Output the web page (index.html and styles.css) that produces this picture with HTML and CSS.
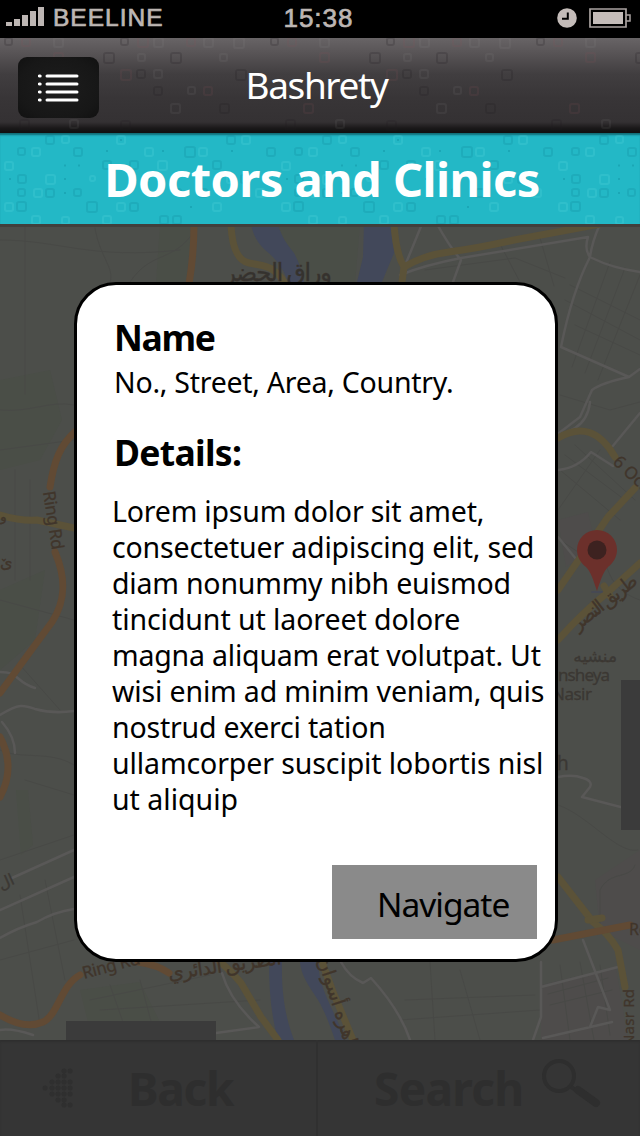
FILE: index.html
```html
<!DOCTYPE html>
<html lang="en">
<head>
<meta charset="utf-8">
<title>Bashrety</title>
<link rel="stylesheet" href="styles.css">
</head>
<body>
<div class="screen">
  <div class="status">
    <div class="carrier">
      <svg width="40" height="22" viewBox="0 0 40 22" fill="#bdb6b3"><path d="M0 17h6v4H0zM8 14h6v7H8zM16 10h6v11h-6zM24 6h6v15h-6zM32 2h6v19h-6z"/></svg>
      <span class="carrier-name">BEELINE</span>
    </div>
    <span class="time">15:38</span>
    <div class="indicators">
      <svg width="20" height="20" viewBox="0 0 20 20"><circle cx="10" cy="10" r="9.8" fill="#c4bcb9"/><path d="M10.8 4.5v6.3H5" fill="none" stroke="#000" stroke-width="2"/></svg>
      <svg width="42" height="20" viewBox="0 0 42 20"><path d="M1 1h36v18H1z" fill="none" stroke="#aaa3a1" stroke-width="1.7"/><path d="M4 4h30v12H4z" fill="#c4bcb9"/><path d="M37 7h4v6h-4" fill="none" stroke="#aaa3a1" stroke-width="1.5"/></svg>
    </div>
  </div>

  <header class="header">
    <svg class="texture" width="640" height="95">
      <defs>
        <pattern id="grayTiles" width="266" height="100" patternUnits="userSpaceOnUse">
          <g fill="none" stroke-width="2">
            <g stroke="#1e1b1c" stroke-opacity=".2">
              <rect x="5" y="0" width="7" height="7" rx="2"/><rect x="121" y="0" width="7" height="7" rx="2"/><rect x="104" y="15" width="10" height="10" rx="2"/><rect x="171" y="15" width="10" height="10" rx="2"/><rect x="137" y="32" width="8" height="8" rx="2"/><rect x="236" y="32" width="10" height="10" rx="2"/><rect x="220" y="66" width="9" height="9" rx="2"/><rect x="154" y="49" width="8" height="8" rx="2"/><rect x="20" y="82" width="9" height="9" rx="2"/><rect x="121" y="83" width="9" height="9" rx="2"/>
            </g>
            <g stroke="#8a4b58" stroke-opacity=".14">
              <rect x="22" y="0" width="8" height="8" rx="2"/><rect x="138" y="-1" width="10" height="10" rx="2"/><rect x="187" y="0" width="8" height="8" rx="2"/><rect x="54" y="15" width="9" height="9" rx="2"/><rect x="121" y="32" width="10" height="10" rx="2"/><rect x="204" y="49" width="8" height="8" rx="2"/><rect x="38" y="66" width="9" height="9" rx="2"/>
            </g>
            <g stroke="#a09a9d" stroke-opacity=".09">
              <rect x="54" y="0" width="9" height="9" rx="2"/><rect x="154" y="0" width="9" height="9" rx="2"/><rect x="204" y="0" width="9" height="9" rx="2"/><rect x="234" y="0" width="10" height="10" rx="2"/><rect x="138" y="16" width="7" height="7" rx="2"/><rect x="220" y="16" width="7" height="7" rx="2"/><rect x="154" y="32" width="8" height="8" rx="2"/><rect x="188" y="49" width="7" height="7" rx="2"/><rect x="171" y="66" width="9" height="9" rx="2"/><rect x="70" y="82" width="8" height="8" rx="2"/>
            </g>
          </g>
        </pattern>
      </defs>
      <rect width="640" height="95" fill="url(#grayTiles)"/>
    </svg>
    <button class="menu" aria-label="Menu">
      <svg width="42" height="28" viewBox="0 0 42 28" stroke="#fff" stroke-width="3" stroke-linecap="round"><path d="M9 2h30M9 10h30M9 18h30M9 26h30M1.400 2h.8M1.400 10h.8M1.400 18h.8M1.400 26h.8"/></svg>
    </button>
    <h1 class="title">Bashrety</h1>
  </header>

  <div class="banner">
    <svg class="texture" width="640" height="91">
      <defs>
        <pattern id="tealTiles" width="277" height="97" patternUnits="userSpaceOnUse">
          <g fill="none" stroke-width="2">
            <g stroke="#0b8796" stroke-opacity=".24">
              <rect x="46" y="3" width="8" height="8" rx="2"/><rect x="18" y="15" width="7" height="7" rx="2"/><rect x="74" y="15" width="8" height="8" rx="2"/><rect x="185" y="14" width="10" height="10" rx="2"/><rect x="213" y="28" width="8" height="8" rx="2"/><rect x="18" y="42" width="8" height="8" rx="2"/><rect x="103" y="28" width="8" height="8" rx="2"/><rect x="46" y="56" width="8" height="8" rx="2"/><rect x="17" y="69" width="9" height="9" rx="2"/><rect x="87" y="69" width="10" height="10" rx="2"/><rect x="160" y="83" width="8" height="8" rx="2"/><rect x="130" y="70" width="8" height="8" rx="2"/><rect x="227" y="3" width="8" height="8" rx="2"/><rect x="267" y="15" width="8" height="8" rx="2"/><rect x="241" y="42" width="8" height="8" rx="2"/><rect x="175" y="56" width="6" height="6" rx="2"/><rect x="18" y="56" width="7" height="7" rx="2"/><rect x="74" y="56" width="7" height="7" rx="2"/><rect x="130" y="28" width="8" height="8" rx="2"/><rect x="199" y="56" width="8" height="8" rx="2"/><rect x="173" y="83" width="8" height="8" rx="2"/>
            </g>
            <g stroke="#61dbe2" stroke-opacity=".2">
              <rect x="62" y="3" width="7" height="7" rx="2"/><rect x="5" y="29" width="8" height="8" rx="2"/><rect x="32" y="15" width="8" height="8" rx="2"/><rect x="46" y="42" width="9" height="9" rx="2"/><rect x="117" y="3" width="8" height="8" rx="2"/><rect x="145" y="15" width="8" height="8" rx="2"/><rect x="199" y="15" width="8" height="8" rx="2"/><rect x="158" y="28" width="9" height="9" rx="2"/><rect x="5" y="70" width="8" height="8" rx="2"/><rect x="34" y="56" width="8" height="8" rx="2"/><rect x="117" y="70" width="8" height="8" rx="2"/><rect x="213" y="70" width="8" height="8" rx="2"/><rect x="90" y="43" width="5" height="5" rx="2"/><rect x="242" y="3" width="8" height="8" rx="2"/><rect x="256" y="56" width="8" height="8" rx="2"/><rect x="62" y="84" width="7" height="7" rx="2"/><rect x="32" y="83" width="8" height="8" rx="2"/><rect x="103" y="83" width="8" height="8" rx="2"/><rect x="227" y="42" width="8" height="8" rx="2"/>
            </g>
            <g stroke="#0b8796" stroke-opacity=".35"><path d="M64 32.500h2M78 32.500h2M64 46h2M64 60h2M106 18h2M120 7h2M9 46h2M162 18h2M231 18h2M231 60h2M190 74h2M148 46h2"/></g>
          </g>
        </pattern>
      </defs>
      <rect width="640" height="91" fill="url(#tealTiles)"/>
    </svg>
    <h2 class="banner-title">Doctors and Clinics</h2>
  </div>

  <main class="map-area">
    <svg class="map" width="640" height="816" viewBox="0 224 640 816" fill="none" stroke-linecap="round" stroke-linejoin="round">
      <rect y="224" width="640" height="816" fill="#4c4e4a"/>
      <g fill="#4a4e47">
        <path d="M160 224h32l-6 60h-30zM0 380l50-10 12 50-22 40-40 10zM270 224h90l-5 60h-55zM80 990l60-8 20 40-70 8zM0 590l45-20-10 70-35 30zM16 790h12l5 55-12 10z"/>
      </g>
      <g fill="#4e4c4b"><path d="M558 520l30-8 8 35-30 20zM595 880l45-30v100l-40-20zM541 985l75-18 12 73h-87z"/></g>
      <g stroke="#484946" stroke-width="1">
        <path d="M0 240c60 0 90 20 180 10M95 228c5 30 20 40 15 54M130 282c20-30 40-20 60-45M425 270l90-12 50 20M500 244l20 38M540 238l14 48M565 300l75 40M570 285l70 35M575 325l65 30M610 262l-38 105M625 268l-40 105M640 275l-42 105M560 395l50 15 30-8M560 470l60 50M565 455l60 45M575 445l60 55M600 450l-42 60M560 540l30 20M605 560c5 25 20 35 35 40"/>
        <path d="M25 224v170M0 410c30 3 50-10 74-5M0 450l74-10M15 470v110M30 480v100M0 600l74 20M20 665l40 45M558 805c30 10 60 50 80 45M600 930v-40c10-20 30-10 35-25M0 750c20 10 50 0 74 15M25 780l49 15M0 860l74-25M20 895l20 130M45 880l20 100M0 960l74-20M90 1000l120-25M110 985l14 40M140 980l12 45M100 1010l160-10M430 962l5 78M405 1000l130-5M460 970l20 70M400 1020l140-10M548 994l60-16M550 1005l62-15M560 965l10 75M580 962l14 78M600 965l10 70"/>
      </g>
      <g fill="#42485a">
        <path d="M251 224h27c4 14 9 20 16 29 5 9 8 18 10 29h-16c-4-12-11-23-23-32-8-8-12-15-14-26zM364 224h28l2 29-12 29h-25l6-25z"/>
        <path d="M269 962h13c-1 35 5 60 12 78h-16c-7-25-9-50-9-78zM300 962h18c1 30 18 50 27 78h-10c-7-20-11-30-17-40-10-15-17-25-18-38z"/>
      </g>
      <g stroke="#595857" stroke-width="2.500">
        <path d="M422 224l-18 44M437 224q12 22 24 36l-8 22M400 275q25-10 61-17l127-21M600 224q-8 18-10 33-18 35-29 90l68 30q-28 6-37 13l-12 27-21 16M592 258q20 10 48 14M629 377l11-8M588 237q-4 12 2 20M558 470q20-2 33-18l22 14M612 447l28-34M590 402q-2 18-15 26l-17 9M558 537l18 22"/>
        <path d="M0 672c20 0 15 10 35 16M0 715c20-12 24-10 35-6q18 5 39 2M2 722q13 15 13 31M12 878l62-28M0 910l74-33M0 938q17-10 37-16 17-10 37-13M558 777q15-3 25 1 10 3 7 9l-8 10 58 15"/>
        <path d="M341 962q8 15 22 21l8-5q29 32 39 62M222 973q8 28 37 54l-43 6M541 962v55l-8 23M541 987l77-20M543 1038l69-16M583 940l27 70-12-3-8 20M0 1030q12-2 33 5"/>
      </g>
      <g stroke="#5b5238" stroke-width="7">
        <path d="M231 224c1 25 8 37 18 39s18 2 24 7q8 6 11 12M394 224q2 30 10 43l-2 15M404 267q20-12 45-15 30-4 65-12l86-16M0 515q20 6 37 5l37 8M558 438c23-14 42-7 57 19M635 488l-27 29-50 73M558 640q24-27 49-47l33-30M558 877l35 45q16 12 25 28l7 37M220 962q10 8 21 21l20 34 17 23M322 962l11 30 20 48"/>
        <path d="M588 920l14-2M604 586l6 10"/>
      </g>
      <g stroke="#614a34" stroke-width="7">
        <path d="M194 224q0 30-5 60M76 431c-16 14-22 30-26 56M55 552c12 28 10 50-3 70q-20 27-52 71M0 737q16 30 0 60M0 1015q25 15 43 7c15-7 18-37 37-47M138 962q20 3 31 11M553 940l77-15"/>
      </g>
      <g class="label">
        <text x="332" y="281" font-size="25" text-anchor="start" direction="rtl" textLength="108" fill="#34322f">وراق الحضر</text>
        <text transform="translate(43 492) rotate(81)" font-size="17" textLength="59">Ring Rd</text>
        <text x="0" y="521" font-size="14">و</text>
        <text x="0" y="568" font-size="16">ێ</text>
        <text transform="translate(612 463) rotate(43)" font-size="17">6 October</text>
        <text transform="translate(639 583) rotate(-38)" font-size="19" direction="rtl" textLength="78">طريق النصر</text>
        <text x="617" y="662" font-size="17" direction="rtl" fill="#393937">منشيه</text>
        <text x="558" y="681" font-size="17" textLength="52" fill="#393937">nsheya</text>
        <text x="552" y="700" font-size="17" textLength="40" fill="#393937">Nasir</text>
        <text x="557" y="770" font-size="19" fill="#393937">h</text>
        <text transform="translate(1 890) rotate(-24)" font-size="16" fill="#393937">ال</text>
        <text transform="translate(84 979) rotate(-15)" font-size="17" textLength="59">Ring Rd</text>
        <text transform="translate(282 964) rotate(-8)" font-size="20" direction="rtl" textLength="114">الطريق الدائري</text>
        <text transform="translate(352 1066) rotate(72)" font-size="19" direction="rtl" textLength="112">القاهره أسوان</text>
        <text x="629" y="935" font-size="16">Rd</text>
        <text transform="translate(634 1046) rotate(-90)" font-size="15" textLength="57">Nasr Rd</text>
      </g>
      <path d="M577 550a20 20 0 1 1 40 0c0 7-4 13-9 17-5 5-7 12-11 24-4-12-6-19-11-24-5-4-9-10-9-17z" fill="#6c302b"/>
      <circle cx="597" cy="550" r="9.500" fill="#3d2220"/>
      <path d="M592 592h10" stroke="#444857" stroke-width="1.500"/>
      <path d="M621 680h19v150h-19zM66 1021h150v19H66z" fill="#3b3b3b"/>
      <path d="M0 225.500h640" stroke="#413f3c" stroke-width="3"/>
    </svg>

    <section class="card">
      <h3 class="heading name">Name</h3>
      <p class="address">No., Street, Area, Country.</p>
      <h3 class="heading details">Details:</h3>
      <p class="body">
        <span class="line l1">Lorem ipsum dolor sit amet,</span>
        <span class="line l2">consectetuer adipiscing elit, sed</span>
        <span class="line l3">diam nonummy nibh euismod</span>
        <span class="line l4">tincidunt ut laoreet dolore</span>
        <span class="line l5">magna aliquam erat volutpat. Ut</span>
        <span class="line l6">wisi enim ad minim veniam, quis</span>
        <span class="line l7">nostrud exerci tation</span>
        <span class="line l8">ullamcorper suscipit lobortis nisl</span>
        <span class="line l9">ut aliquip</span>
      </p>
      <button class="navigate">Navigate</button>
    </section>
  </main>

  <footer class="footer">
    <div class="tab back">
      <svg width="32" height="40" viewBox="0 0 32 40" stroke="#2f2f2f" stroke-width="5" stroke-linecap="round"><path d="M3 20h.1M10 14h.1M10 20h.1M10 26h.1M16 8h.1M16 14h.1M16 20h.1M16 26h.1M16 32h.1M22 3h.1M22 8h.1M22 14h.1M22 20h.1M22 26h.1M22 32h.1M22 37h.1M28 3h.1M28 14h.1M28 20h.1M28 26h.1M28 37h.1"/></svg>
      <span class="tab-text back-text">Back</span>
    </div>
    <div class="tab search">
      <span class="tab-text search-text">Search</span>
      <svg width="60" height="50" viewBox="0 0 60 50" fill="none" stroke="#2e2e2e"><circle cx="18" cy="17" r="15" stroke-width="4"/><path d="M30 28l8 5" stroke-width="4"/><path d="M37 31l18 13" stroke-width="8" stroke-linecap="round"/></svg>
    </div>
  </footer>
</div>
</body>
</html>
```
FILE: styles.css
```css
* { box-sizing: border-box; margin: 0; padding: 0; }
body { width: 640px; height: 1136px; overflow: hidden; background: #000; font-family: "Noto Sans", "Open Sans", sans-serif; }
button { border: 0; font: inherit; }
svg { display: block; flex: none; }
.screen { width: 640px; height: 1136px; display: flex; flex-direction: column; }

.status { height: 38px; display: grid; grid-template-columns: 1fr auto 1fr; align-items: center; padding: 0 9px 2px 6px; background: #000; color: #bdb6b3; font-family: "Liberation Sans", Arial, sans-serif; font-size: 24.5px; -webkit-text-stroke: .7px #bdb6b3; }
.carrier { display: flex; align-items: center; gap: 7px; }
.carrier svg { margin-top: -4px; }
.carrier-name { letter-spacing: 1px; }
.time { font-size: 26px; letter-spacing: 1px; }
.indicators { display: flex; justify-content: flex-end; gap: 12px; margin-top: -1px; }

.header { position: relative; height: 95px; display: flex; align-items: center; justify-content: center; background: linear-gradient(#686466 0, #575355 16px, #413e40 36px, #383537 60px, #343133 84px, #1b191a 90px, #111 94px); }
.texture { position: absolute; inset: 0; }
.menu { position: absolute; left: 18px; top: 19px; width: 81px; height: 61px; border-radius: 9px; background: radial-gradient(#1d1d1d, #171717 70%, #111); display: flex; align-items: center; justify-content: center; }
.title { position: relative; padding: 0 7px 2px 0; color: #fff; font-size: 37px; line-height: 48px; font-weight: 400; letter-spacing: -1.4px; }

.banner { position: relative; height: 91px; display: flex; align-items: center; justify-content: center; background: #23b8c6; box-shadow: inset 0 3px 2px -1px #116d77; }
.banner-title { position: relative; padding-left: 4px; color: #fff; font-size: 47px; line-height: 60px; font-weight: 700; letter-spacing: -.55px; white-space: nowrap; }

.map-area { position: relative; height: 816px; padding: 58px 0 0 74px; }
.map { position: absolute; inset: 0; }
.label { font-family: "Noto Sans", "DejaVu Sans", sans-serif; fill: #40352b; stroke: #40352b; stroke-width: .3px; }
.card { position: relative; width: 484px; height: 680px; padding: 32px 18px 0 35px; border: 3px solid #000; border-radius: 42px; background: #fff; color: #000; }
.heading { font-size: 35.5px; line-height: 40px; font-weight: 700; padding-left: 2px; width: max-content; }
.name { letter-spacing: -1.3px; }
.address { margin-top: 7px; padding-left: 2px; font-size: 28.5px; line-height: 36px; letter-spacing: -.26px; width: max-content; }
.details { margin-top: 32px; letter-spacing: -.7px; }
.body { margin-top: 21px; font-size: 28.5px; line-height: 36px; }
.line { display: block; width: max-content; white-space: nowrap; }
.l1 { letter-spacing: -.2px; }
.l2 { letter-spacing: -.17px; }
.l3 { letter-spacing: -.2px; }
.l4 { letter-spacing: -.08px; }
.l5 { letter-spacing: -.2px; }
.l6 { letter-spacing: -.14px; }
.l7 { letter-spacing: -.19px; }
.l8 { letter-spacing: -.1px; }
.navigate { display: flex; align-items: center; width: 205px; height: 74px; margin: 48px 0 0 auto; padding: 3px 0 0 45px; background: #8a8a8a; color: #000; font-size: 33.5px; line-height: 40px; letter-spacing: -1px; }

.footer { height: 96px; display: grid; grid-template-columns: 318px 1fr; background: #353535; box-shadow: inset 0 2px 2px #2f2f2f; }
.tab { display: flex; align-items: center; color: #2e2e2e; }
.back { padding-left: 42px; border-right: 2px solid #303030; }
.back-text { margin-left: 54px; letter-spacing: -1.3px; }
.search { padding-left: 56px; }
.search-text { letter-spacing: -.7px; }
.search-text + svg { margin: -8px 0 0 18px; }
.tab-text { font-size: 46px; line-height: 60px; font-weight: 700; }
```
